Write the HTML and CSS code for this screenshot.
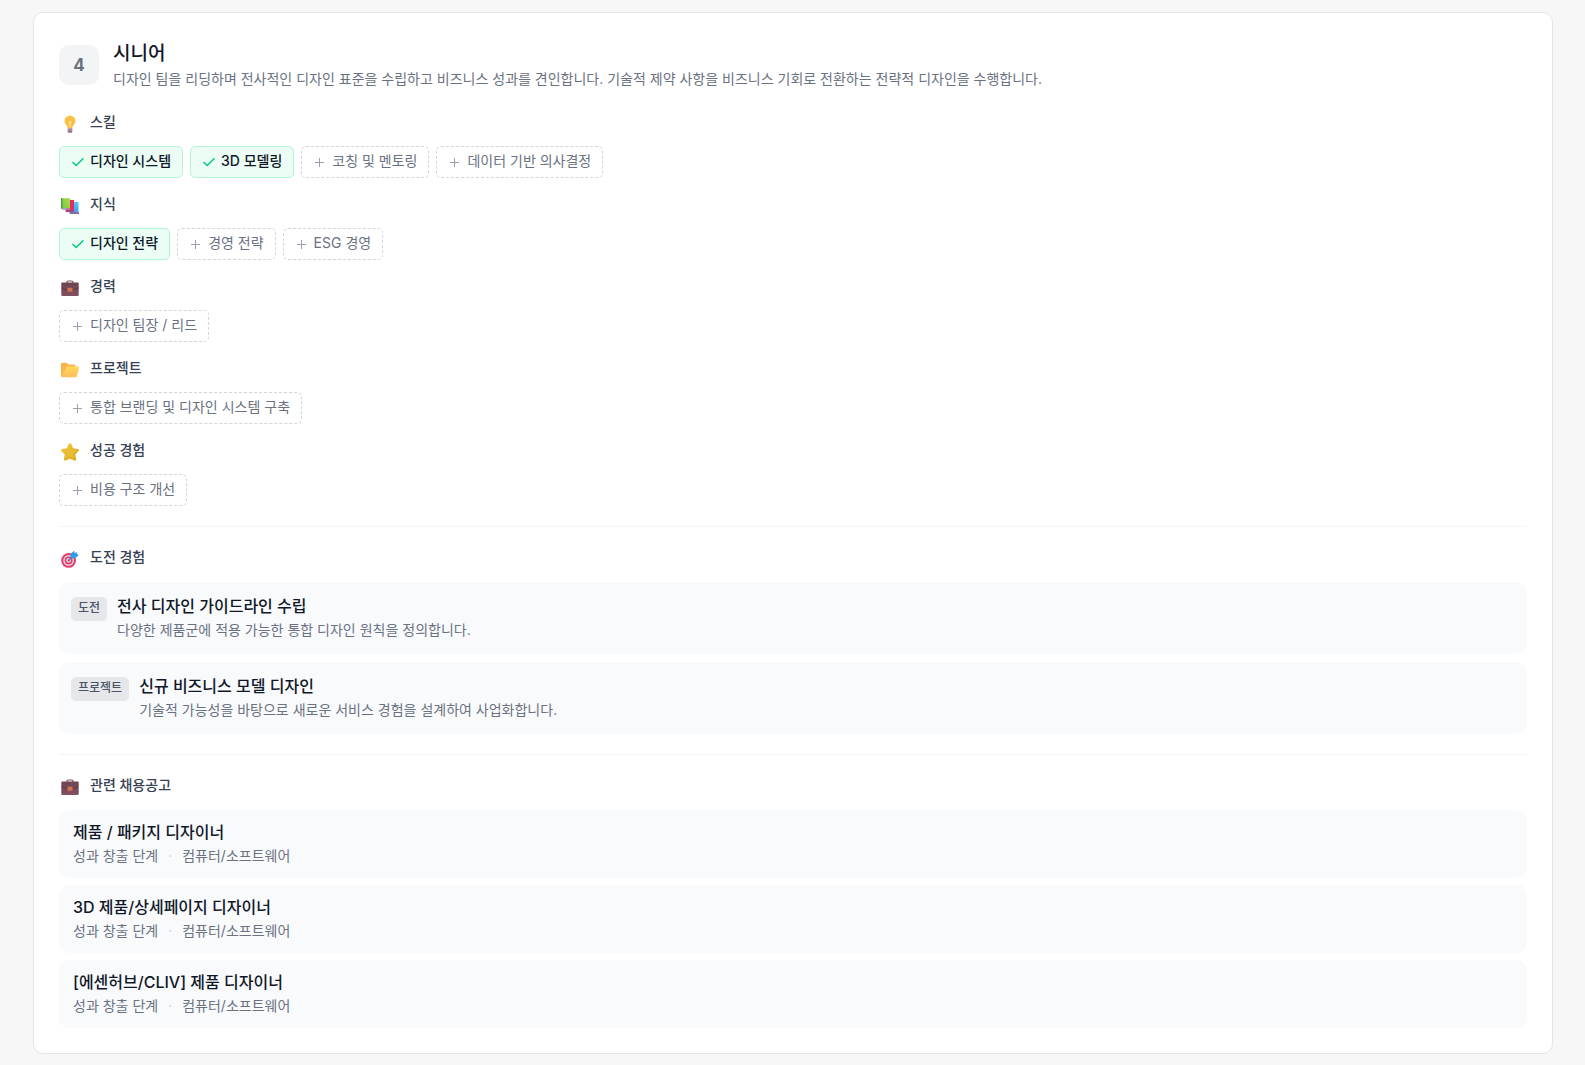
FILE: index.html
```html
<!DOCTYPE html>
<html lang="ko">
<head>
<meta charset="utf-8">
<meta name="viewport" content="width=device-width, initial-scale=1">
<title>시니어</title>
<link rel="stylesheet" href="styles.css">
</head>
<body>
<svg class="sprite" aria-hidden="true">
  <defs>
    <linearGradient id="g-bulb" x1="0" y1="0" x2="0" y2="1"><stop offset="0" stop-color="#f6c544"/><stop offset="1" stop-color="#ffb84f"/></linearGradient>
    <linearGradient id="g-green" x1="1" y1="0" x2="0" y2="1"><stop offset="0" stop-color="#a6dd4b"/><stop offset="1" stop-color="#7cc64c"/></linearGradient>
    <linearGradient id="g-blue" x1="0" y1="0" x2="0" y2="1"><stop offset="0" stop-color="#4fc8fb"/><stop offset="1" stop-color="#3f9fe8"/></linearGradient>
    <linearGradient id="g-case" x1="0" y1="0" x2="0" y2="1"><stop offset="0" stop-color="#6d4450"/><stop offset="1" stop-color="#85505f"/></linearGradient>
    <linearGradient id="g-folder" x1="0" y1="0" x2="0" y2="1"><stop offset="0" stop-color="#ffd75a"/><stop offset="1" stop-color="#ffbf5c"/></linearGradient>
    <linearGradient id="g-star" x1="0" y1="0" x2="1" y2="1"><stop offset="0" stop-color="#f2cf45"/><stop offset="1" stop-color="#d9a21c"/></linearGradient>
    <symbol id="i-bulb" viewBox="0 0 18 18">
      <path d="M9 .5a5.500 5.500 0 0 0-5.500 5.500c0 2.300 1.500 3.500 2.500 5.100.5.900.6 1.900.8 2.400h4.400c.2-.5.300-1.500.8-2.400 1-1.600 2.500-2.800 2.500-5.100A5.500 5.500 0 0 0 9 .5z" fill="url(#g-bulb)"/>
      <path d="M7 6.500c-.3 2 .8 3 1.100 6.500h1.800c.3-3.500 1.400-4.500 1.100-6.500-.5-1-3.500-1-4 0z" fill="#ffe07a" stroke="#f3a83a" stroke-width=".5"/>
      <path d="M6.700 13.500h4.600v3.300c0 .6-.5 1-1.100 1H7.800c-.6 0-1.100-.4-1.100-1z" fill="#8f7391"/>
      <path d="M6.700 14.900h4.600" stroke="#c9b4c6" stroke-width=".7"/>
    </symbol>
    <symbol id="i-books" viewBox="0 0 18 18">
      <path d="M9 5h8.500v11.500H9z" fill="url(#g-blue)"/><path d="M8 15.300h10V17H9z" fill="#85699b"/>
      <path d="M5 3h8v11H5z" fill="#e62e5c"/><path d="M4 13.200h9V15H5z" fill="#a0477f"/>
      <path d="M0 1.200h9v10.300H0z" fill="url(#g-green)"/><path d="M0 1.200h1.500v11.300L0 11.500z" fill="#4e9b48"/>
      <path d="M1 11.200h8v1.500H1.500z" fill="#9a93ad"/>
    </symbol>
    <symbol id="i-case" viewBox="0 0 18 18">
      <path d="M6 4.500V3.300c0-.8.6-1.300 1.300-1.300h3.400c.7 0 1.300.5 1.300 1.300v1.200" fill="none" stroke="#76505a" stroke-width="1.200"/>
      <rect x=".3" y="3.500" width="17.400" height="13.500" rx="1" fill="url(#g-case)"/>
      <path d="M.5 9c4 2 13 2 17 0" fill="none" stroke="#56333f" stroke-width=".7"/>
      <rect x="6.500" y="8.800" width="5" height="4" rx=".8" fill="#cf7553"/>
    </symbol>
    <symbol id="i-folder" viewBox="0 0 18 18">
      <path d="M0 3c0-.8.500-1.300 1.300-1.300h4L7.500 3.500H13c1 0 1.500.5 1.500 1.500v11H1.500C.6 16 0 15.500 0 14.500z" fill="#f8b64a"/>
      <path d="M5 6.500c.2-.8.700-1 1.500-1h11c.6 0 .8.400.6 1L16 15c-.2.800-.7 1.200-1.500 1.200H1.200c-.5 0-.7-.3-.5-.8z" fill="url(#g-folder)"/>
    </symbol>
    <symbol id="i-star" viewBox="0 0 18 18">
      <path d="M7.700 1c.5-1.100 2.100-1.100 2.600 0l1.900 4.300 4.700.6c1.100.1 1.500 1.500.7 2.200l-3.300 3.400.8 4.700c.2 1.200-.9 1.900-1.900 1.400L9 15.700l-4.200 1.900c-1 .5-2.100-.2-1.900-1.400l.8-4.700L.4 8.100C-.4 7.400 0 6 1.100 5.900l4.700-.6z" fill="url(#g-star)"/>
      <path d="M9 2.200l1.600 4.500 5.200.7-4 3 1.300 5L9 13l-4.100 2.400 1.300-5-4-3 5.200-.7z" fill="#e8bd33"/>
    </symbol>
    <symbol id="i-target" viewBox="0 0 18 18">
      <circle cx="7.600" cy="10.400" r="7.400" fill="#e0406a"/><circle cx="7.600" cy="10.400" r="5.300" fill="#e9d3e3"/>
      <circle cx="7.600" cy="10.400" r="3.900" fill="#dc3d66"/><circle cx="7.600" cy="10.400" r="2.400" fill="#f0d4e1"/><circle cx="7.600" cy="10.400" r="1" fill="#c43569"/>
      <path d="M7.800 10.200l5-5" stroke="#456fae" stroke-width="1.200"/>
      <path d="M9.500 6.500l.6-3L13 .8l.9 2.300L16 2l-.4 1.800 2.300.9-2.700 2.900-3.300.6-1.200 1z" fill="#2f9ded"/>
    </symbol>
    <symbol id="i-check" viewBox="0 0 14 14"><path d="M2 7.500l3.200 3L12 3.800" fill="none" stroke="currentColor" stroke-width="1.500" stroke-linecap="round" stroke-linejoin="round"/></symbol>
    <symbol id="i-plus" viewBox="0 0 14 14"><path d="M6.500 3v9M2 7.500h9" fill="none" stroke="currentColor" stroke-width="1"/></symbol>
  </defs>
</svg>

<main class="card">
  <header class="level">
    <span class="level-number">4</span>
    <div>
      <h1 class="level-title">시니어</h1>
      <p class="level-text">디자인 팀을 리딩하며 전사적인 디자인 표준을 수립하고 비즈니스 성과를 견인합니다. 기술적 제약 사항을 비즈니스 기회로 전환하는 전략적 디자인을 수행합니다.</p>
    </div>
  </header>

  <div class="groups">
    <section class="group">
      <h2 class="heading"><svg class="emoji"><use href="#i-bulb"/></svg>스킬</h2>
      <div class="chips">
        <button type="button" class="chip chip-done"><svg class="mark"><use href="#i-check"/></svg>디자인 시스템</button>
        <button type="button" class="chip chip-done"><svg class="mark"><use href="#i-check"/></svg>3D 모델링</button>
        <button type="button" class="chip"><svg class="mark"><use href="#i-plus"/></svg>코칭 및 멘토링</button>
        <button type="button" class="chip"><svg class="mark"><use href="#i-plus"/></svg>데이터 기반 의사결정</button>
      </div>
    </section>
    <section class="group">
      <h2 class="heading"><svg class="emoji"><use href="#i-books"/></svg>지식</h2>
      <div class="chips">
        <button type="button" class="chip chip-done"><svg class="mark"><use href="#i-check"/></svg>디자인 전략</button>
        <button type="button" class="chip"><svg class="mark"><use href="#i-plus"/></svg>경영 전략</button>
        <button type="button" class="chip"><svg class="mark"><use href="#i-plus"/></svg>ESG 경영</button>
      </div>
    </section>
    <section class="group">
      <h2 class="heading"><svg class="emoji"><use href="#i-case"/></svg>경력</h2>
      <div class="chips">
        <button type="button" class="chip"><svg class="mark"><use href="#i-plus"/></svg>디자인 팀장 / 리드</button>
      </div>
    </section>
    <section class="group">
      <h2 class="heading"><svg class="emoji"><use href="#i-folder"/></svg>프로젝트</h2>
      <div class="chips">
        <button type="button" class="chip"><svg class="mark"><use href="#i-plus"/></svg>통합 브랜딩 및 디자인 시스템 구축</button>
      </div>
    </section>
    <section class="group">
      <h2 class="heading"><svg class="emoji"><use href="#i-star"/></svg>성공 경험</h2>
      <div class="chips">
        <button type="button" class="chip"><svg class="mark"><use href="#i-plus"/></svg>비용 구조 개선</button>
      </div>
    </section>
  </div>

  <section class="block">
    <h2 class="heading"><svg class="emoji"><use href="#i-target"/></svg>도전 경험</h2>
    <ul class="list challenges">
      <li class="challenge">
        <span class="tag">도전</span>
        <div>
          <h3 class="item-title">전사 디자인 가이드라인 수립</h3>
          <p class="item-text">다양한 제품군에 적용 가능한 통합 디자인 원칙을 정의합니다.</p>
        </div>
      </li>
      <li class="challenge">
        <span class="tag">프로젝트</span>
        <div>
          <h3 class="item-title">신규 비즈니스 모델 디자인</h3>
          <p class="item-text">기술적 가능성을 바탕으로 새로운 서비스 경험을 설계하여 사업화합니다.</p>
        </div>
      </li>
    </ul>
  </section>

  <section class="block">
    <h2 class="heading"><svg class="emoji"><use href="#i-case"/></svg>관련 채용공고</h2>
    <ul class="list jobs">
      <li><a class="job" href="#">
        <span class="item-title">제품 / 패키지 디자이너</span>
        <span class="item-text job-meta"><span>성과 창출 단계</span><span class="dot">·</span><span>컴퓨터/소프트웨어</span></span>
      </a></li>
      <li><a class="job" href="#">
        <span class="item-title">3D 제품/상세페이지 디자이너</span>
        <span class="item-text job-meta"><span>성과 창출 단계</span><span class="dot">·</span><span>컴퓨터/소프트웨어</span></span>
      </a></li>
      <li><a class="job" href="#">
        <span class="item-title">[에센허브/CLIV] 제품 디자이너</span>
        <span class="item-text job-meta"><span>성과 창출 단계</span><span class="dot">·</span><span>컴퓨터/소프트웨어</span></span>
      </a></li>
    </ul>
  </section>
</main>
</body>
</html>
```
FILE: styles.css
```css
* {
  box-sizing: border-box;
}

body {
  margin: 0;
  padding: 12px 32px 11px 33px;
  background: #f7f7f7;
  color: #101828;
  font-family: Inter, "Noto Sans CJK KR", sans-serif;
  font-size: 14px;
  line-height: 20px;
}

h1, h2, h3, p, ul {
  margin: 0;
  padding: 0;
}

.sprite {
  position: absolute;
  width: 0;
  height: 0;
}

.card {
  padding: 25px;
  background: #fff;
  border: 1px solid #e5e5e5;
  border-radius: 10px;
}

.level {
  display: flex;
  align-items: center;
  gap: 14px;
  margin-bottom: 20px;
  padding: 2px 0;
}

.level-number {
  display: flex;
  align-items: center;
  justify-content: center;
  flex: none;
  width: 40px;
  height: 40px;
  border-radius: 10px;
  background: #f3f4f6;
  color: #6a7282;
  font-size: 17px;
  font-weight: 700;
}

.level-title {
  font-size: 19px;
  font-weight: 500;
  line-height: 28px;
}

.level-text {
  color: #6a7282;
  line-height: 22px;
}

.groups {
  display: grid;
  gap: 16px;
}

.heading {
  display: flex;
  align-items: flex-start;
  gap: 11px;
  height: 24px;
  margin-bottom: 10px;
  padding-left: 2px;
  color: #364153;
  font-size: 14px;
  font-weight: 500;
}

.emoji {
  flex: none;
  width: 18px;
  height: 18px;
  margin-top: 3px;
}

.chips {
  display: flex;
  flex-wrap: wrap;
  gap: 7px;
}

.chip {
  display: inline-flex;
  align-items: flex-start;
  gap: 5px;
  height: 32px;
  padding: 0 11px;
  border: 1px dashed #d1d5dc;
  border-radius: 5px;
  background: #fff;
  color: #6a7282;
  font: inherit;
  line-height: 28px;
}

.chip-done {
  border: 1px solid #b5f3d6;
  background: #ecfdf5;
  color: #101828;
  font-weight: 500;
}

.mark {
  flex: none;
  width: 14px;
  height: 14px;
  margin-top: 8px;
  color: #99a1af;
}

.chip-done .mark {
  color: #00c985;
}

.block {
  margin-top: 20px;
  padding-top: 20px;
  border-top: 1px solid #f3f4f6;
}

.block .heading {
  margin-bottom: 11px;
}

.list {
  display: grid;
  list-style: none;
}

.challenges {
  gap: 8px;
}

.jobs {
  gap: 7px;
}

.challenge {
  display: flex;
  align-items: flex-start;
  gap: 10px;
  padding: 12px;
  border-radius: 10px;
  background: #f9fafc;
}

.tag {
  flex: none;
  height: 24px;
  margin-top: 3px;
  padding: 0 7px;
  border-radius: 5px;
  background: #e5e7eb;
  color: #4a5565;
  font-size: 12px;
  font-weight: 500;
  line-height: 22px;
}

.item-title {
  display: block;
  color: #101828;
  font-size: 16px;
  font-weight: 500;
  line-height: 24px;
}

.item-text {
  color: #6a7282;
  line-height: 24px;
}

.job {
  display: block;
  padding: 10px 14px;
  border-radius: 10px;
  background: #f9fafc;
  text-decoration: none;
}

.job-meta {
  display: flex;
  gap: 10px;
}

.dot {
  color: #d1d5dc;
}
```
